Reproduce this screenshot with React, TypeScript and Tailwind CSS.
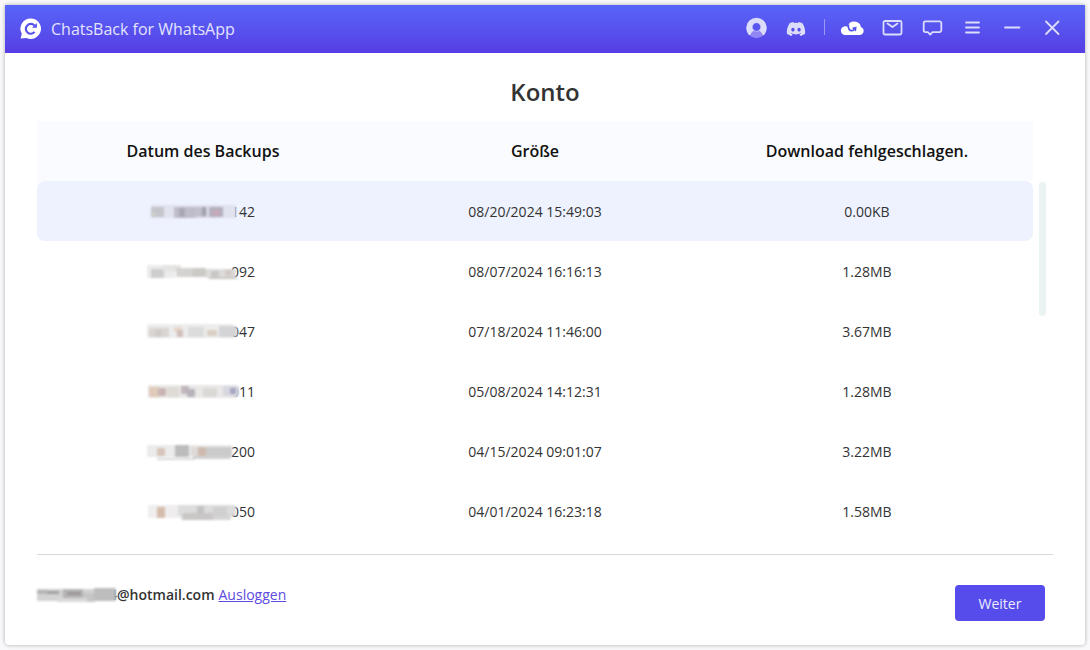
import type { ReactNode } from "react";
import { FaDiscord } from "react-icons/fa";

// [x, y, width, height, colour] of one patch in a masked text
type Patch = [number, number, number, number, string];

type Backup = {
  id: string;
  date: string;
  size: string;
  mask: Patch[];
};

const BACKUPS: Backup[] = [
  {
    id: "142",
    date: "08/20/2024 15:49:03",
    size: "0.00KB",
    mask: [
      [8, 3, 85, 13, "#e0e2ee"],
      [8, 5, 13, 10, "#c4c5cc"],
      [9, 10, 4, 4, "#cfd0c2"],
      [31, 5, 22, 11, "#bfbdca"],
      [36, 6, 6, 9, "#aaa8b5"],
      [52, 5, 12, 10, "#c3c0cd"],
      [59, 5, 4, 9, "#a1a1ae"],
      [66, 5, 14, 10, "#b3afbe"],
      [70, 8, 7, 6, "#c7a9b8"],
    ],
  },
  {
    id: "092",
    date: "08/07/2024 16:16:13",
    size: "1.28MB",
    mask: [
      [4, 3, 28, 13, "#ececec"],
      [8, 7, 13, 9, "#cfcece"],
      [20, 3, 18, 6, "#e4e4e3"],
      [33, 6, 16, 9, "#d5d3d2"],
      [49, 6, 14, 9, "#cccac7"],
      [63, 7, 30, 9, "#dedcda"],
      [68, 9, 8, 6, "#c9c7c6"],
      [82, 8, 7, 6, "#d0cbc8"],
      [66, 15, 28, 2, "#c9c6c0"],
    ],
  },
  {
    id: "047",
    date: "07/18/2024 11:46:00",
    size: "3.67MB",
    mask: [
      [4, 2, 86, 14, "#ececec"],
      [6, 6, 20, 9, "#d8d5d2"],
      [12, 8, 7, 7, "#cfcbc8"],
      [31, 5, 8, 5, "#e7d7cc"],
      [34, 8, 6, 7, "#d2bfba"],
      [45, 5, 16, 10, "#dcdcdc"],
      [64, 8, 10, 6, "#d9cfc4"],
      [76, 4, 18, 11, "#d4d4d7"],
    ],
  },
  {
    id: "011",
    date: "05/08/2024 14:12:31",
    size: "1.28MB",
    mask: [
      [5, 3, 89, 13, "#eae8e7"],
      [6, 5, 10, 10, "#e0cbbb"],
      [15, 6, 8, 8, "#c8b5b3"],
      [24, 5, 12, 10, "#dedbd7"],
      [38, 4, 8, 8, "#c1b7bd"],
      [44, 7, 8, 8, "#b8b2bb"],
      [60, 6, 14, 9, "#dad9d6"],
      [80, 4, 16, 10, "#d7d7e0"],
      [87, 6, 6, 6, "#a7a6c1"],
    ],
  },
  {
    id: "200",
    date: "04/15/2024 09:01:07",
    size: "3.22MB",
    mask: [
      [4, 3, 85, 12, "#ebebeb"],
      [14, 6, 8, 8, "#d8c4ba"],
      [32, 3, 14, 12, "#bcbcbc"],
      [48, 5, 8, 9, "#ddd9d6"],
      [55, 5, 8, 9, "#cfb9ae"],
      [63, 5, 26, 9, "#cbcbcb"],
      [14, 16, 38, 2, "#d9d9d9"],
      [50, 14, 38, 3, "#d1d1d1"],
    ],
  },
  {
    id: "050",
    date: "04/01/2024 16:23:18",
    size: "1.58MB",
    mask: [
      [5, 3, 32, 13, "#efeded"],
      [14, 5, 8, 11, "#d5bdad"],
      [35, 3, 58, 11, "#dddcdc"],
      [38, 12, 50, 6, "#d6d4d4"],
      [40, 11, 30, 7, "#c9c6c6"],
      [54, 4, 7, 8, "#c3c3c3"],
      [70, 5, 14, 9, "#d0d0d1"],
    ],
  },
];

const EMAIL_MASK: Patch[] = [
  [0, 4, 79, 12, "#d2d2d2"],
  [0, 5, 10, 4, "#b5b5b5"],
  [10, 6, 12, 3, "#a0a0a0"],
  [26, 4, 20, 9, "#b5b3b3"],
  [30, 7, 14, 3, "#9b9797"],
  [46, 8, 12, 9, "#c6c6c6"],
  [57, 3, 22, 13, "#bdbdbd"],
  [20, 13, 30, 4, "#d9d9d9"],
];

function Mask({ patches, className }: { patches: Patch[]; className: string }) {
  return (
    <svg
      aria-hidden
      className={`relative z-10 h-5 shrink-0 overflow-visible blur-[1px] ${className}`}
    >
      {patches.map(([x, y, w, h, fill], i) => (
        <rect key={i} x={x} y={y} width={w} height={h} rx={1} fill={fill} />
      ))}
    </svg>
  );
}

function Logo() {
  return (
    <svg aria-hidden viewBox="0 0 22 22" className="size-[22px]">
      <path
        d="M11 0.5a10.2 10.2 0 1 1-4.6 19.4L0.6 20.6l1.2-4.8A10.2 10.2 0 0 1 11 0.5Z"
        fill="#fff"
      />
      <path
        d="M14.4 7.6A4.9 4.9 0 1 0 14.6 13.9"
        fill="none"
        stroke="#5853ee"
        strokeWidth="2.2"
      />
      <path d="M12 9.8h4.9V5Z" fill="#5853ee" />
    </svg>
  );
}

function Stroked({ children }: { children: ReactNode }) {
  return (
    <svg
      aria-hidden
      viewBox="0 0 24 24"
      className="size-6"
      fill="none"
      stroke="currentColor"
      strokeWidth={1.8}
      strokeLinecap="round"
      strokeLinejoin="round"
    >
      {children}
    </svg>
  );
}

function BarButton({ label, children }: { label: string; children: ReactNode }) {
  return (
    <button
      type="button"
      aria-label={label}
      className="flex h-12 w-10 items-center justify-center text-[#dcdcfb] hover:text-white"
    >
      {children}
    </button>
  );
}

function TitleBar() {
  return (
    <header className="flex h-12 items-center justify-between bg-linear-to-b from-[#5865f8] to-[#563de4] pr-[13px] pl-[15px]">
      <div className="flex items-center gap-[9px]">
        <Logo />
        <span className="text-base text-[#e3e3fc]">ChatsBack for WhatsApp</span>
      </div>
      <div className="flex items-center">
        <BarButton label="Profil">
          <svg aria-hidden viewBox="0 0 24 24" className="size-6">
            <circle cx="12.5" cy="11.3" r="10" fill="#8f86f3" />
            <path
              d="M4.1 16.7A10.2 10.2 0 1 1 20.9 16.7C20.5 18 19 18.5 18.3 17.2 17.5 15.3 16.5 14.3 15.1 13.8H9.9C8.5 14.3 7.5 15.3 6.7 17.2 6 18.500 4.500 18 4.100 16.700Z"
              fill="#dcdcfb"
            />
            <circle cx="12.5" cy="10" r="4.300" fill="#5757f0" stroke="#dcdcfb" strokeWidth="0.600" />
          </svg>
        </BarButton>
        <BarButton label="Discord">
          <FaDiscord aria-hidden className="mb-px size-5" />
        </BarButton>
        <div className="flex w-4 justify-center pb-1">
          <span className="h-4 w-px bg-[#9a98f5]" />
        </div>
        <BarButton label="Cloud">
          <svg aria-hidden viewBox="0 0 24 24" className="size-6">
            <path
              d="M5.5 18a4.4 4.400 0 0 1-.5-8.800c1-.1 1.900.1 2.600.5A6.800 6.800 0 0 1 20.900 9.900 4.200 4.200 0 0 1 20 18Z"
              fill="#fff"
            />
            <path
              d="M8.500 7.500c-.7 3.600.9 6.200 3.300 6.200 1.300 0 2.300-.8 3-1.700"
              fill="none"
              stroke="#5652ec"
              strokeWidth="1.800"
            />
            <path d="M12 10.700l4.600-1.100-.6 4.900Z" fill="#5652ec" />
          </svg>
        </BarButton>
        <BarButton label="E-Mail">
          <Stroked>
            <rect x="3.5" y="4" width="18" height="13.5" rx="1.5" />
            <path d="M7.5 6.500l5 3.500 5-3.500" />
          </Stroked>
        </BarButton>
        <BarButton label="Feedback">
          <Stroked>
            <path d="M5.500 4.300h14a1.800 1.800 0 0 1 1.800 1.800v7.200a1.800 1.800 0 0 1-1.800 1.800H12.500l-2.300 2.500-2.400-2.500H5.500a1.800 1.800 0 0 1-1.800-1.800V6.100a1.800 1.800 0 0 1 1.800-1.800Z" />
          </Stroked>
        </BarButton>
        <BarButton label="Menü">
          <Stroked>
            <path d="M6 5.500h13M6 10.500h13M6 15.500h13" />
          </Stroked>
        </BarButton>
        <BarButton label="Minimieren">
          <Stroked>
            <path d="M5 10.500h14.500" />
          </Stroked>
        </BarButton>
        <BarButton label="Schließen">
          <Stroked>
            <path d="M6 4.500l12.500 12.500M18.500 4.500L6 17" />
          </Stroked>
        </BarButton>
      </div>
    </header>
  );
}

function BackupTable() {
  return (
    <table className="w-full table-fixed border-separate border-spacing-0 text-center">
      <thead className="bg-[#fafbfe] text-base text-[#111]">
        <tr className="h-[60px]">
          <th className="font-semibold">Datum des Backups</th>
          <th className="font-semibold">Größe</th>
          <th className="font-semibold">Download fehlgeschlagen.</th>
        </tr>
      </thead>
      <tbody className="text-sm text-[#333] [&_td]:pt-px">
        {BACKUPS.map((b, i) => (
          <tr key={b.id} className={i === 0 ? "h-[60px] [&>td]:bg-[#edf2fe]" : "h-[60px]"}>
            <td className="rounded-l-lg">
              <div className="mx-auto flex w-[104px] items-center justify-end">
                <Mask patches={b.mask} className="-mr-2 w-24" />
                <span>{b.id}</span>
              </div>
            </td>
            <td>{b.date}</td>
            <td className="rounded-r-lg">{b.size}</td>
          </tr>
        ))}
      </tbody>
    </table>
  );
}

export default function App() {
  return (
    <div className="flex min-h-screen bg-[#f9f9fb] p-[5px] font-['Open_Sans','Noto_Sans',sans-serif]">
      <div className="flex w-full flex-col overflow-hidden rounded-b-sm bg-white shadow-[0_0_4px_rgba(0,0,0,0.3)]">
        <TitleBar />
        <main className="flex flex-1 flex-col px-8">
          <h1 className="pt-[21px] pb-[11px] text-center text-2xl leading-9 font-semibold text-[#333]">
            Konto
          </h1>
          <div className="flex flex-1 items-start gap-[6px] pr-[7px] pb-3">
            <div className="flex-1">
              <BackupTable />
            </div>
            {/* scroll thumb, starts level with the first row */}
            <div className="mt-[61px] h-[134px] w-[7px] rounded-full bg-[#e9f3f1]" />
          </div>
          <footer className="flex items-start justify-between border-t border-[#d9d9d9] pt-[30px] pr-2 pb-6">
            <div className="flex items-center text-sm leading-5 text-[#333]">
              <Mask patches={EMAIL_MASK} className="-mr-2 w-20" />
              <span className="font-semibold">4@hotmail.com</span>
              <a href="#" className="ml-1 text-[#5b4be0] underline">
                Ausloggen
              </a>
            </div>
            <button
              type="button"
              className="h-9 w-[90px] rounded-sm bg-[#564ceb] pt-0.5 text-sm text-[#ececfd] hover:bg-[#6459f0]"
            >
              Weiter
            </button>
          </footer>
        </main>
      </div>
    </div>
  );
}
